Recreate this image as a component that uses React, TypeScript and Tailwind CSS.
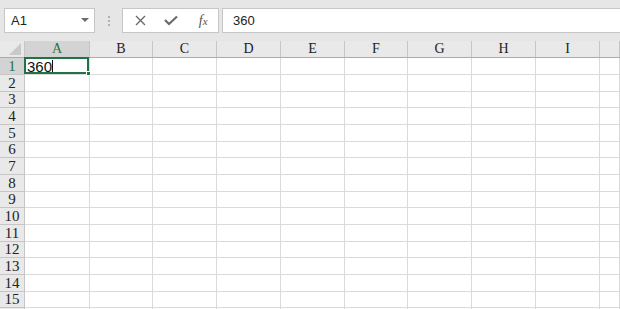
import React from "react";

const cols = ["A", "B", "C", "D", "E", "F", "G", "H", "I", ""];
const rowHeights = ["h-[17px]", "h-[17px]", "h-[16px]", "h-[17px]", "h-[17px]", "h-[16px]", "h-[17px]", "h-[17px]", "h-[16px]", "h-[17px]", "h-[17px]", "h-[16px]", "h-[17px]", "h-[17px]", "h-[16px]", "h-[17px]"];

const gridTpl = "grid grid-cols-[25px_65px_63px_64px_64px_64px_63px_64px_64px_64px_1fr]";

export default function App() {
  return (
    <div className="w-[620px] h-[309px] overflow-hidden bg-white" style={{ fontFamily: "'Liberation Sans', Arial, sans-serif" }}>
      {/* toolbar */}
      <div className="h-[41px] bg-[#e6e6e6] flex items-start pt-[8px] pl-[4px]">
        <div className="w-[91px] h-[25px] bg-white border border-[#c6c6c6] flex items-center justify-between pl-[6px] pr-[5px]">
          <span className="text-[13px] text-[#222]">A1</span>
          <svg width="8" height="5" viewBox="0 0 8 5"><path d="M0 0 L8 0 L4 4 Z" fill="#6b6b6b" /></svg>
        </div>
        <div className="w-[27px] h-[25px] flex flex-col items-center justify-center gap-[2px]">
          <div className="w-[2px] h-[2px] bg-[#b0b0b0]" />
          <div className="w-[2px] h-[2px] bg-[#b0b0b0]" />
          <div className="w-[2px] h-[2px] bg-[#b0b0b0]" />
        </div>
        <div className="w-[97px] h-[25px] bg-white border border-[#c6c6c6] flex items-center">
          <div className="w-[32px] flex justify-center pl-[3px]">
            <svg width="11" height="11" viewBox="0 0 11 11"><path d="M1 1 L10 10 M10 1 L1 10" stroke="#6b6b6b" strokeWidth="1.4" /></svg>
          </div>
          <div className="w-[32px] flex justify-center">
            <svg width="14" height="11" viewBox="0 0 14 11"><path d="M1 5 L5 9 L13 1.5" stroke="#6b6b6b" strokeWidth="2.2" fill="none" /></svg>
          </div>
          <div className="w-[32px] flex justify-center pl-[2px]">
            <span className="text-[14px] italic text-[#555] leading-none" style={{ fontFamily: "'Liberation Serif', 'Times New Roman', serif" }}>f<span className="text-[11px]">x</span></span>
          </div>
        </div>
        <div className="ml-[3px] flex-1 h-[25px] bg-white border border-[#c6c6c6] border-r-0 flex items-center pl-[10px]">
          <span className="text-[13px] text-[#222]">360</span>
        </div>
      </div>

      {/* header row */}
      <div className={`${gridTpl} h-[17px] bg-[#e9e9e9] border-b border-[#ababab]`} style={{ fontFamily: "'Liberation Serif', 'DejaVu Serif', serif" }}>
        <div className="relative border-r border-[#c6c6c6] overflow-hidden">
          <svg className="absolute right-[3px] bottom-[2px]" width="12" height="12" viewBox="0 0 12 12"><path d="M12 0 L12 12 L0 12 Z" fill="#c9c9c9" /></svg>
        </div>
        {cols.map((c, i) => (
          <div
            key={i}
            className={
              i === 0
                ? "bg-[#d3d3d3] border-r border-[#c6c6c6] flex items-center justify-center text-[14px] text-[#217346] leading-none"
                : "border-r border-[#c6c6c6] flex items-center justify-center text-[14px] text-[#222] leading-none"
            }
          >
            {c}
          </div>
        ))}
      </div>

      {/* rows */}
      {rowHeights.map((h, r) => (
        <div key={r} className={`${gridTpl} ${h}`}>
          <div
            className={
              r === 0
                ? "bg-[#d3d3d3] border-r border-b border-[#c6c6c6] flex items-center justify-center text-[15px] text-[#217346] leading-none"
                : "bg-[#e9e9e9] border-r border-b border-[#c6c6c6] flex items-center justify-center text-[15px] text-[#222] leading-none"
            }
            style={{ fontFamily: "'Liberation Serif', 'DejaVu Serif', serif" }}
          >
            {r + 1}
          </div>
          {cols.map((_, c) =>
            r === 0 && c === 0 ? (
              <div key={c} className="relative border-r border-b border-[#dadada] flex items-center pl-[2px]">
                <span className="text-[15px] text-[#111] leading-none">360</span>
                <div className="w-px h-[13px] bg-[#111]" />
                <div className="absolute left-[-1px] top-[-1px] right-0 bottom-0 border-2 border-[#217346]" />
                <div className="absolute right-[-2px] bottom-[-2px] w-[5px] h-[5px] bg-[#217346] border border-white" />
              </div>
            ) : (
              <div key={c} className="border-r border-b border-[#dadada]" />
            )
          )}
        </div>
      ))}
    </div>
  );
}
